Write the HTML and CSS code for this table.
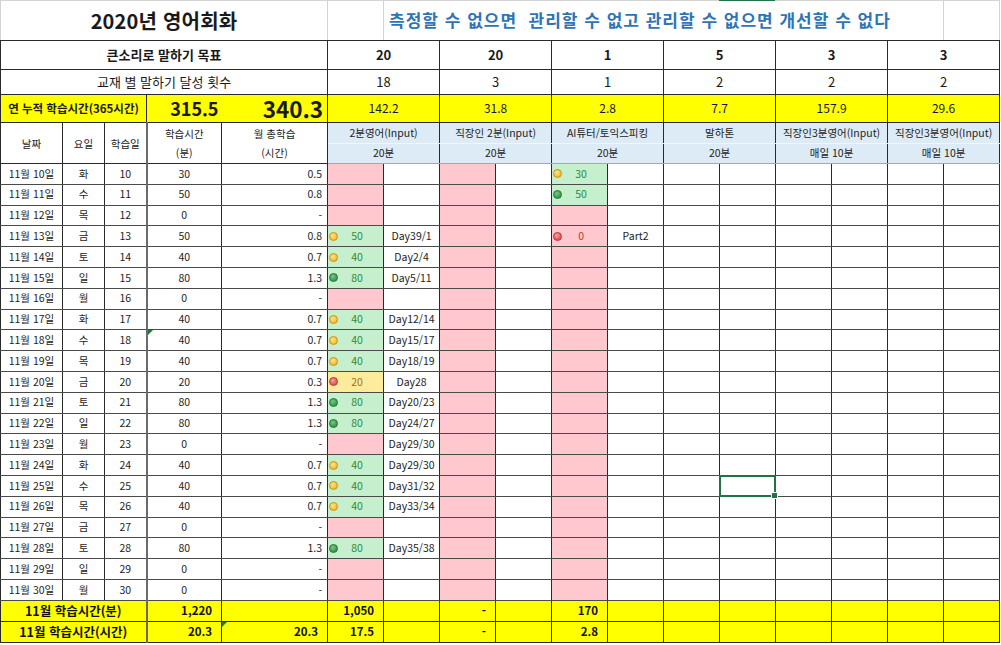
FILE: index.html
```html
<!DOCTYPE html>
<html lang="ko">
<head>
<meta charset="utf-8">
<title>2020년 영어회화</title>
<link rel="stylesheet" href="styles.css">
</head>
<body>
<div class="sheet">
<table>
<colgroup>
<col class="w62"><col class="w42"><col class="w42"><col class="w75"><col class="w106">
<col class="w56"><col class="w56"><col class="w56"><col class="w56"><col class="w56"><col class="w56">
<col class="w56"><col class="w56"><col class="w56"><col class="w56"><col class="w56"><col class="w56">
</colgroup>
<tbody>
<tr class="t1">
<td colspan="5" class="title">2020년 영어회화</td>
<td class="gl"></td>
<td colspan="10" class="slogan gl">측정할 수 없으면&nbsp; 관리할 수 없고 관리할 수 없으면 개선할 수 없다</td>
<td class="gl"></td>
</tr>
<tr class="t2">
<td colspan="5" class="bold">큰소리로 말하기 목표</td>
<td colspan="2" class="bold num">20</td><td colspan="2" class="bold num">20</td><td colspan="2" class="bold num">1</td>
<td colspan="2" class="bold num">5</td><td colspan="2" class="bold num">3</td><td colspan="2" class="bold num">3</td>
</tr>
<tr class="t3">
<td colspan="5">교재 별 말하기 달성 횟수</td>
<td colspan="2" class="num">18</td><td colspan="2" class="num">3</td><td colspan="2" class="num">1</td>
<td colspan="2" class="num">2</td><td colspan="2" class="num">2</td><td colspan="2" class="num">2</td>
</tr>
<tr class="t4">
<td colspan="3" class="ylabel">연 누적 학습시간(365시간)</td>
<td class="big1">315.5</td>
<td class="big2">340.3</td>
<td colspan="2">142.2</td><td colspan="2">31.8</td><td colspan="2">2.8</td>
<td colspan="2">7.7</td><td colspan="2">157.9</td><td colspan="2">29.6</td>
</tr>
<tr class="t5">
<td rowspan="2" class="lh">날짜</td>
<td rowspan="2" class="lh">요일</td>
<td rowspan="2" class="lh">학습일</td>
<td rowspan="2" class="lh thick">학습시간<br>(분)</td>
<td rowspan="2" class="lh">월 총학습<br>(시간)</td>
<td colspan="2" class="bh">2분영어(Input)</td><td colspan="2" class="bh">직장인 2분(Input)</td><td colspan="2" class="bh">AI튜터/토익스피킹</td>
<td colspan="2" class="bh">말하톤</td><td colspan="2" class="bh">직장인3분영어(Input)</td><td colspan="2" class="bh">직장인3분영어(Input)</td>
</tr>
<tr class="t6">
<td colspan="2" class="bh2">20분</td><td colspan="2" class="bh2">20분</td><td colspan="2" class="bh2">20분</td>
<td colspan="2" class="bh2">20분</td><td colspan="2" class="bh2">매일 10분</td><td colspan="2" class="bh2">매일 10분</td>
</tr>

<tr class="d"><td>11월 10일</td><td>화</td><td>10</td><td class="thick">30</td><td class="hr">0.5</td>
<td class="p"></td><td></td><td class="p"></td><td></td><td class="g ic"><div><i class="dot dy"></i><span>30</span></div></td><td></td>
<td></td><td></td><td></td><td></td><td></td><td></td></tr>

<tr class="d"><td>11월 11일</td><td>수</td><td>11</td><td class="thick">50</td><td class="hr">0.8</td>
<td class="p"></td><td></td><td class="p"></td><td></td><td class="g ic"><div><i class="dot dg"></i><span>50</span></div></td><td></td>
<td></td><td></td><td></td><td></td><td></td><td></td></tr>

<tr class="d"><td>11월 12일</td><td>목</td><td>12</td><td class="thick">0</td><td class="hr">-</td>
<td class="p"></td><td></td><td class="p"></td><td></td><td class="p"></td><td></td>
<td></td><td></td><td></td><td></td><td></td><td></td></tr>

<tr class="d"><td>11월 13일</td><td>금</td><td>13</td><td class="thick">50</td><td class="hr">0.8</td>
<td class="g ic"><div><i class="dot dy"></i><span>50</span></div></td><td>Day39/1</td><td class="p"></td><td></td><td class="p ic red"><div><i class="dot dr"></i><span>0</span></div></td><td>Part2</td>
<td></td><td></td><td></td><td></td><td></td><td></td></tr>

<tr class="d"><td>11월 14일</td><td>토</td><td>14</td><td class="thick">40</td><td class="hr">0.7</td>
<td class="g ic"><div><i class="dot dy"></i><span>40</span></div></td><td>Day2/4</td><td class="p"></td><td></td><td class="p"></td><td></td>
<td></td><td></td><td></td><td></td><td></td><td></td></tr>

<tr class="d"><td>11월 15일</td><td>일</td><td>15</td><td class="thick">80</td><td class="hr">1.3</td>
<td class="g ic"><div><i class="dot dg"></i><span>80</span></div></td><td>Day5/11</td><td class="p"></td><td></td><td class="p"></td><td></td>
<td></td><td></td><td></td><td></td><td></td><td></td></tr>

<tr class="d"><td>11월 16일</td><td>월</td><td>16</td><td class="thick">0</td><td class="hr">-</td>
<td class="p"></td><td></td><td class="p"></td><td></td><td class="p"></td><td></td>
<td></td><td></td><td></td><td></td><td></td><td></td></tr>

<tr class="d"><td>11월 17일</td><td>화</td><td>17</td><td class="thick">40</td><td class="hr">0.7</td>
<td class="g ic"><div><i class="dot dy"></i><span>40</span></div></td><td>Day12/14</td><td class="p"></td><td></td><td class="p"></td><td></td>
<td></td><td></td><td></td><td></td><td></td><td></td></tr>

<tr class="d"><td>11월 18일</td><td>수</td><td>18</td><td class="thick tri">40</td><td class="hr">0.7</td>
<td class="g ic"><div><i class="dot dy"></i><span>40</span></div></td><td>Day15/17</td><td class="p"></td><td></td><td class="p"></td><td></td>
<td></td><td></td><td></td><td></td><td></td><td></td></tr>

<tr class="d"><td>11월 19일</td><td>목</td><td>19</td><td class="thick">40</td><td class="hr">0.7</td>
<td class="g ic"><div><i class="dot dy"></i><span>40</span></div></td><td>Day18/19</td><td class="p"></td><td></td><td class="p"></td><td></td>
<td></td><td></td><td></td><td></td><td></td><td></td></tr>

<tr class="d"><td>11월 20일</td><td>금</td><td>20</td><td class="thick">20</td><td class="hr">0.3</td>
<td class="yw ic"><div><i class="dot dr"></i><span>20</span></div></td><td>Day28</td><td class="p"></td><td></td><td class="p"></td><td></td>
<td></td><td></td><td></td><td></td><td></td><td></td></tr>

<tr class="d"><td>11월 21일</td><td>토</td><td>21</td><td class="thick">80</td><td class="hr">1.3</td>
<td class="g ic"><div><i class="dot dg"></i><span>80</span></div></td><td>Day20/23</td><td class="p"></td><td></td><td class="p"></td><td></td>
<td></td><td></td><td></td><td></td><td></td><td></td></tr>

<tr class="d"><td>11월 22일</td><td>일</td><td>22</td><td class="thick">80</td><td class="hr">1.3</td>
<td class="g ic"><div><i class="dot dg"></i><span>80</span></div></td><td>Day24/27</td><td class="p"></td><td></td><td class="p"></td><td></td>
<td></td><td></td><td></td><td></td><td></td><td></td></tr>

<tr class="d"><td>11월 23일</td><td>월</td><td>23</td><td class="thick">0</td><td class="hr">-</td>
<td class="p"></td><td>Day29/30</td><td class="p"></td><td></td><td class="p"></td><td></td>
<td></td><td></td><td></td><td></td><td></td><td></td></tr>

<tr class="d"><td>11월 24일</td><td>화</td><td>24</td><td class="thick">40</td><td class="hr">0.7</td>
<td class="g ic"><div><i class="dot dy"></i><span>40</span></div></td><td>Day29/30</td><td class="p"></td><td></td><td class="p"></td><td></td>
<td></td><td></td><td></td><td></td><td></td><td></td></tr>

<tr class="d"><td>11월 25일</td><td>수</td><td>25</td><td class="thick">40</td><td class="hr">0.7</td>
<td class="g ic"><div><i class="dot dy"></i><span>40</span></div></td><td>Day31/32</td><td class="p"></td><td></td><td class="p"></td><td></td>
<td></td><td class="sel"></td><td></td><td></td><td></td><td></td></tr>

<tr class="d"><td>11월 26일</td><td>목</td><td>26</td><td class="thick">40</td><td class="hr">0.7</td>
<td class="g ic"><div><i class="dot dy"></i><span>40</span></div></td><td>Day33/34</td><td class="p"></td><td></td><td class="p"></td><td></td>
<td></td><td></td><td></td><td></td><td></td><td></td></tr>

<tr class="d"><td>11월 27일</td><td>금</td><td>27</td><td class="thick">0</td><td class="hr">-</td>
<td class="p"></td><td></td><td class="p"></td><td></td><td class="p"></td><td></td>
<td></td><td></td><td></td><td></td><td></td><td></td></tr>

<tr class="d"><td>11월 28일</td><td>토</td><td>28</td><td class="thick">80</td><td class="hr">1.3</td>
<td class="g ic"><div><i class="dot dg"></i><span>80</span></div></td><td>Day35/38</td><td class="p"></td><td></td><td class="p"></td><td></td>
<td></td><td></td><td></td><td></td><td></td><td></td></tr>

<tr class="d"><td>11월 29일</td><td>일</td><td>29</td><td class="thick">0</td><td class="hr">-</td>
<td class="p"></td><td></td><td class="p"></td><td></td><td class="p"></td><td></td>
<td></td><td></td><td></td><td></td><td></td><td></td></tr>

<tr class="d"><td>11월 30일</td><td>월</td><td>30</td><td class="thick">0</td><td class="hr">-</td>
<td class="p"></td><td></td><td class="p"></td><td></td><td class="p"></td><td></td>
<td></td><td></td><td></td><td></td><td></td><td></td></tr>

<tr class="tot">
<td colspan="3" class="tl">11월 학습시간(분)</td><td class="thick">1,220</td><td></td>
<td>1,050</td><td></td><td>-</td><td></td><td>170</td><td></td>
<td></td><td></td><td></td><td></td><td></td><td></td>
</tr>
<tr class="tot">
<td colspan="3" class="tl">11월 학습시간(시간)</td><td class="thick">20.3</td><td class="tri">20.3</td>
<td>17.5</td><td></td><td>-</td><td></td><td>2.8</td><td></td>
<td></td><td></td><td></td><td></td><td></td><td></td>
</tr>
</tbody>
</table>
</div>
</body>
</html>
```

FILE: styles.css
```css
html, body {
  margin: 0;
  padding: 0;
  background: #ffffff;
}

body {
  font-family: "Noto Sans CJK KR", "Noto Sans", sans-serif;
  color: #1a1a1a;
}

.sheet {
  position: relative;
  width: 1001px;
}

.sheet::before {
  content: "";
  position: absolute;
  left: 719px;
  top: 0;
  width: 56px;
  height: 1px;
  background: #217346;
  z-index: 2;
}

table {
  border-collapse: collapse;
  table-layout: fixed;
  width: 999px;
}

.w62 { width: 62px; }
.w42 { width: 42px; }
.w75 { width: 75px; }
.w106 { width: 106px; }
.w56 { width: 56px; }

td {
  border: 1px solid #2a2a2a;
  padding: 0 3px;
  text-align: center;
  vertical-align: middle;
  font-size: 10.5px;
  line-height: 1.2;
  white-space: nowrap;
  position: relative;
}

/* title row */
.t1 { height: 40px; }
.t1 td {
  border-top: 1px solid #d4d4d4;
  border-left: 1px solid #d4d4d4;
  border-right: 1px solid #d4d4d4;
}
.title {
  font-size: 20px;
  font-weight: 700;
  letter-spacing: 0.2px;
}
.slogan {
  text-align: left;
  padding-left: 5px;
  font-size: 17px;
  font-weight: 700;
  color: #2e75b6;
  letter-spacing: 1px;
}

.t2 { height: 29px; }
.t2 td { font-size: 13px; }
.bold { font-weight: 700; }

.t3 { height: 25px; }
.t3 td { font-size: 13px; }

.t4 { height: 28px; }
.t4 td {
  background: #ffff00;
  font-size: 12px;
}
.t4 .ylabel {
  font-size: 11.5px;
  font-weight: 700;
}
.t4 .big1 {
  font-size: 18px;
  font-weight: 700;
  text-align: right;
  border-right-style: hidden;
}
.t4 .big2 {
  font-size: 22.5px;
  font-weight: 700;
  text-align: right;
  padding-right: 4px;
  border-left-style: hidden;
}

.t5 { height: 21px; }
.t6 { height: 20px; }

.lh {
  font-size: 10.5px;
  line-height: 19px;
  color: #222;
}

.bh, .bh2 {
  background: #ddebf7;
  font-size: 10.5px;
  color: #222;
}
.bh { border-bottom: 1px solid #f3f6f9; }
.bh2 { border-bottom: 1px solid #9eaab6; }

/* data rows */
.d { height: 20.8px; }
.d td {
  border-top-color: #4a4a4a;
  border-bottom-color: #4a4a4a;
  color: #1e1e1e;
}
.d .hr {
  text-align: right;
  padding-right: 5px;
}

.thick {
  border-left: 2px solid #6a6a6a;
}

.p { background: #ffc7ce; }
.g { background: #c6efce; }
.yw { background: #ffeb9c; }

.ic {
  padding: 0 7px 0 1px;
}
.ic div {
  display: flex;
  align-items: center;
}
.ic span {
  flex: 1;
  text-align: center;
}
.g.ic span { color: #2f8a3a; }
.yw.ic span { color: #a0701a; }
.red.ic span { color: #c0392b; }

.dot {
  display: inline-block;
  width: 9px;
  height: 9px;
  border-radius: 50%;
  box-sizing: border-box;
}
.dy {
  background: radial-gradient(circle at 40% 35%, #ffe38a 0%, #f6c33c 60%, #e0a51f 100%);
  border: 1px solid #c8941c;
}
.dg {
  background: radial-gradient(circle at 40% 35%, #7cc58a 0%, #3f9e52 60%, #2f8040 100%);
  border: 1px solid #2b7a3b;
}
.dr {
  background: radial-gradient(circle at 40% 35%, #f7a0a0 0%, #e25f5f 60%, #c94343 100%);
  border: 1px solid #b53c3c;
}

/* selected cell */
.sel::after {
  content: "";
  position: absolute;
  left: -1px;
  top: -1px;
  right: -1px;
  bottom: -1px;
  border: 2px solid #217346;
}
.sel::before {
  content: "";
  position: absolute;
  right: -3px;
  bottom: -3px;
  width: 5px;
  height: 5px;
  background: #217346;
  border: 1px solid #ffffff;
  z-index: 1;
}

/* comment / error marker triangle */
.tri::before {
  content: "";
  position: absolute;
  left: 0;
  top: 0;
  border-top: 5px solid #1d7a33;
  border-right: 5px solid transparent;
}

/* totals */
.tot { height: 21px; }
.tot td {
  background: #ffff00;
  font-size: 11.5px;
  font-weight: 700;
  text-align: right;
  padding-right: 9px;
  color: #111;
}
.tot .tl {
  text-align: center;
  padding-right: 3px;
  font-size: 12.5px;
}
```
